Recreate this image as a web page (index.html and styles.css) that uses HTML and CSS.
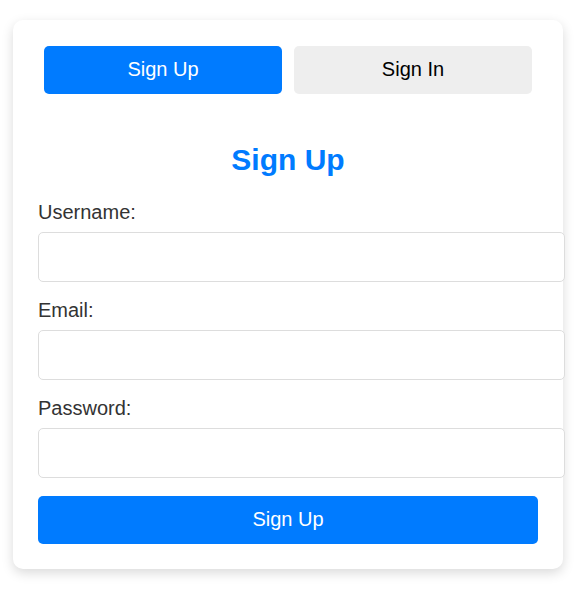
FILE: index.html
```html
<!DOCTYPE html>
<html lang="en">
<head>
  <meta charset="UTF-8" />
  <meta name="viewport" content="width=device-width, initial-scale=1.0" />
  <title>Sign Up</title>
  <link rel="stylesheet" href="styles.css">
</head>
<body>
  <div class="container">
    <div class="tabs">
      <button class="tab active">Sign Up</button>
      <button class="tab">Sign In</button>
    </div>
    <form class="form">
      <h2>Sign Up</h2>
      <label for="username">Username:</label>
      <input type="text" id="username">
      <label for="email">Email:</label>
      <input type="email" id="email">
      <label for="password">Password:</label>
      <input type="password" id="password">
      <button type="button" class="submit">Sign Up</button>
    </form>
  </div>
</body>
</html>
```

FILE: styles.css
```css
* {
  margin: 0;
  padding: 0;
}
body {
  font-family: "Liberation Sans", Arial, sans-serif;
  font-size: 20px;
  background: #fff;
  padding: 20px 0 23px 13px;
}
.container {
  width: 500px;
  padding: 26px 25px 25px;
  background: #fff;
  border-radius: 10px;
  box-shadow: 0 4px 12px rgba(0, 0, 0, 0.15);
}
.tabs {
  display: flex;
  justify-content: center;
  gap: 12px;
}
button {
  font-family: inherit;
  font-size: 20px;
  line-height: 24px;
  padding: 11px 0 13px;
  border: none;
  border-radius: 5px;
  cursor: pointer;
}
.tab {
  width: 238px;
  background: #eee;
  color: #000;
}
.tab.active {
  background: #007bff;
  color: #fff;
}
h2 {
  font-size: 30px;
  line-height: 34px;
  text-align: center;
  color: #007bff;
  margin: 49px 0 24px;
}
label {
  display: block;
  color: #333;
  line-height: 23px;
  margin-bottom: 8px;
}
input {
  display: block;
  width: 100%;
  font: inherit;
  line-height: 24px;
  padding: 12px 13px 12px 12px;
  border: 1px solid #ddd;
  border-radius: 5px;
  margin-bottom: 17px;
}
.submit {
  display: block;
  width: 100%;
  margin-top: 18px;
  background: #007bff;
  color: #fff;
}
```
